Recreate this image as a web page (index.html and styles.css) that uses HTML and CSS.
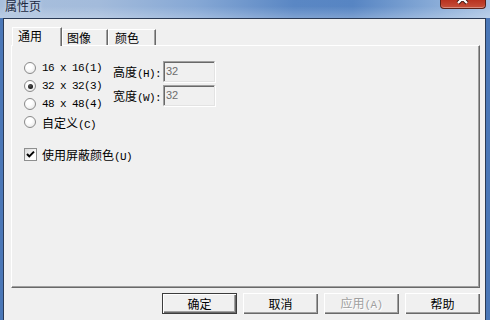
FILE: index.html
```html
<!DOCTYPE html>
<html lang="zh">
<head>
<meta charset="UTF-8">
<title>属性页</title>
<link rel="stylesheet" href="styles.css">
</head>
<body>
<div class="win">
  <div class="cap">
    <span class="cap-title">属性页</span>
    <span class="close">
      <svg width="46" height="19" viewBox="0 0 46 19"><path d="M18 4l9 9M27 4l-9 9" stroke="#3a1a14" stroke-width="4" fill="none"/><path d="M18 4l9 9M27 4l-9 9" stroke="#fff" stroke-width="2.2" fill="none"/></svg>
    </span>
  </div>

  <div class="client">
    <div class="tabs">
      <div class="tab on">通用</div>
      <div class="tab t2">图像</div>
      <div class="tab t3">颜色</div>
    </div>

    <div class="panel">
      <div class="top">
        <div class="radios">
          <div class="opt"><i class="radio"></i><span class="m">16 x 16(1)</span></div>
          <div class="opt"><i class="radio sel"></i><span class="m">32 x 32(3)</span></div>
          <div class="opt"><i class="radio"></i><span class="m">48 x 48(4)</span></div>
          <div class="opt"><i class="radio"></i><span>自定义<span class="m">(C)</span></span></div>
        </div>
        <div class="size">
          <div class="field"><span class="lbl">高度<span class="m">(H):</span></span><span class="inp">32</span></div>
          <div class="field"><span class="lbl">宽度<span class="m">(W):</span></span><span class="inp">32</span></div>
        </div>
      </div>
      <div class="opt chkrow">
        <i class="chk"><svg width="11" height="11" viewBox="0 0 11 11"><path d="M2 5l2.3 2.4L9 2.6" stroke="#000" stroke-width="2" fill="none"/></svg></i><span>使用屏蔽颜色<span class="m">(U)</span></span>
      </div>
    </div>

    <div class="btns">
      <button class="btn def">确定</button>
      <button class="btn">取消</button>
      <button class="btn off">应用<span class="m">(A)</span></button>
      <button class="btn">帮助</button>
    </div>
  </div>
</div>
</body>
</html>
```

FILE: styles.css
```css
*{margin:0;padding:0;box-sizing:border-box}
body{width:490px;height:320px;overflow:hidden;font:12px "Noto Sans CJK SC",sans-serif;color:#000}
.m{font-family:"Liberation Mono","Noto Sans CJK SC",monospace;font-size:11px;letter-spacing:-.6px}

.win{width:490px;height:320px;display:flex;flex-direction:column;background:#4a77b7;overflow:hidden}

/* 标题栏 */
.cap{height:18px;flex:none;display:flex;align-items:flex-start;
  background:linear-gradient(180deg,rgba(255,255,255,0) 35%,rgba(255,255,255,.22) 100%),
  linear-gradient(90deg,#a8bfdc 0%,#a3bbdb 20%,#86a8d5 40%,#5a87c4 60%,#5785c3 72%,#80a5d4 86%,#a9c3e3 100%)}
.cap-title{margin:0 0 0 5px;line-height:12px;color:#1a2840;text-shadow:0 0 4px rgba(255,255,255,.7)}
.close{margin:-10px 4px 0 auto;width:46px;height:19px;border:1px solid #5a2119;border-top:none;border-radius:0 0 4px 4px;
  background:linear-gradient(180deg,#e08a78 0%,#cf5a45 45%,#b8321f 55%,#c6503a 100%);box-shadow:inset 0 -1px rgba(255,255,255,.35);display:block}
.close svg{display:block;margin-left:-1px}

/* 客户区 */
.client{flex:1;margin:0 4px 0 3px;border:1px solid #2a3a55;border-bottom:none;background:#f0f0f0;padding:8px 0 0 7px}

.tabs{display:flex;align-items:flex-end;height:18px;margin-left:1px}
.tab{height:16px;border-top:1px solid #fff;border-left:1px solid #fff;border-right:1px solid #696969;
  box-shadow:inset -1px 0 #a0a0a0;padding:2px 0 0 5px;line-height:12px;background:#f0f0f0}
.tab.on{width:50px;height:19px;margin-bottom:-1px;position:relative;z-index:1}
.t2{width:46px;padding-left:4px}
.t3{width:48px;padding-left:6px}

.panel{width:469px;height:243px;border-top:1px solid #fff;border-left:1px solid #fff;border-right:1px solid #696969;border-bottom:1px solid #696969;
  box-shadow:inset -1px -1px #a0a0a0;padding:13px 0 0 12px}

.top{display:flex}
.radios{width:89px;display:flex;flex-direction:column}
.opt{height:18px;display:flex;align-items:center;gap:6px;white-space:nowrap}
.radio{width:12px;height:12px;border-radius:50%;border:1px solid #8a8a8a;display:grid;place-items:center;
  background:radial-gradient(circle at 40% 35%,#fff 30%,#e2e2e2 100%)}
.radio.sel::after{content:"";width:5px;height:5px;border-radius:50%;background:radial-gradient(circle at 40% 35%,#555,#000)}

.size{margin-top:2px;display:flex;flex-direction:column;gap:3px}
.field{display:flex;align-items:center;height:21px}
.lbl{width:50px;white-space:nowrap}
.inp{width:52px;height:21px;border:1px solid #e3e3e3;border-top-color:#a0a0a0;border-left-color:#a0a0a0;
  box-shadow:inset 1px 1px #696969,1px 1px #fff;background:#f0f0f0;color:#6d6d6d;
  font:11px "Liberation Sans",sans-serif;line-height:18px;padding-left:2px}

.chkrow{margin-top:17px;height:13px;gap:5px}
.chk{width:13px;height:13px;border:1px solid #8e8f8f;background:linear-gradient(135deg,#d8d8d8,#fff 70%);display:grid;place-items:center}
.chk svg{display:block}

/* 按钮 */
.btns{display:flex;justify-content:flex-end;gap:6px;margin-top:5px;padding-right:5px}
.btn{width:75px;height:21px;border:none;background:#f0f0f0;font:12px "Noto Sans CJK SC",sans-serif;color:#000;line-height:19px;
  box-shadow:inset 1px 1px #fff,inset -1px -1px #696969,inset -2px -2px #a0a0a0}
.btn.def{border:1px solid #3c3c3c;box-shadow:inset 1px 1px #fff,inset -1px -1px #696969,inset -2px -2px #a0a0a0}
.btn.off{color:#a0a0a0;text-shadow:1px 1px #fff}
```
